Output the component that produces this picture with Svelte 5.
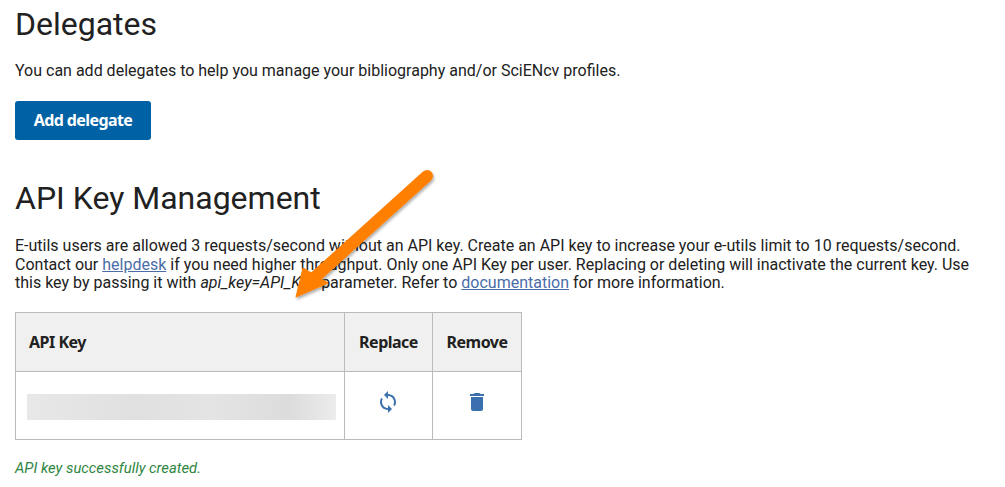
<script lang="ts">
  // key value is blurred out in the screenshot, so the cell only holds a placeholder bar
  const keyColumns = ['API Key', 'Replace', 'Remove'];
</script>

<main class="page">
  <section class="delegates">
    <h1>Delegates</h1>
    <p>You can add delegates to help you manage your bibliography and/or SciENcv profiles.</p>
    <button class="primary">Add delegate</button>
  </section>

  <section class="keys">
    <h1>API Key Management</h1>
    <p class="intro">
      E-utils users are allowed 3 requests/second without an API key. Create an API key to increase your e-utils limit to 10 requests/second. Contact our <a href="#helpdesk">helpdesk</a> if you need higher throughput. Only one API Key per user. Replacing or deleting will inactivate the current key. Use this key by passing it with <em>api_key=API_Key</em> parameter. Refer to <a href="#docs">documentation</a> for more information.
    </p>

    <table>
      <colgroup>
        <col class="c-key" />
        <col class="c-replace" />
        <col />
      </colgroup>
      <thead>
        <tr>
          {#each keyColumns as col, i}
            <th class:center={i > 0}>{col}</th>
          {/each}
        </tr>
      </thead>
      <tbody>
        <tr>
          <td class="key"><div class="blur"></div></td>
          <td class="center">
            <svg class="icon replace" width="24" height="24" viewBox="0 0 24 24" aria-label="Replace">
              <path fill="currentColor" d="M12 4V1L8 5l4 4V6c3.31 0 6 2.69 6 6 0 1.01-.25 1.97-.7 2.8l1.46 1.46C19.54 15.03 20 13.57 20 12c0-4.42-3.58-8-8-8zm0 14c-3.31 0-6-2.69-6-6 0-1.01.25-1.97.7-2.8L5.24 7.74C4.46 8.97 4 10.43 4 12c0 4.42 3.58 8 8 8v3l4-4-4-4v3z" />
            </svg>
          </td>
          <td class="center">
            <svg class="icon" width="24" height="24" viewBox="0 0 24 24" aria-label="Remove">
              <path fill="currentColor" d="M6 19c0 1.1.9 2 2 2h8c1.1 0 2-.9 2-2V7H6v12zM19 4h-3.5l-1-1h-5l-1 1H5v2h14V4z" />
            </svg>
          </td>
        </tr>
      </tbody>
    </table>

    <p class="success">API key successfully created.</p>
  </section>

  <svg class="arrow" width="150" height="140" viewBox="0 0 150 140" aria-hidden="true">
    <defs>
      <filter id="arrow-shadow" x="-20%" y="-20%" width="140%" height="140%">
        <feDropShadow dx="1" dy="2" stdDeviation="1.5" flood-color="#000" flood-opacity="0.35" />
      </filter>
    </defs>
    <g filter="url(#arrow-shadow)">
      <path d="M137 11 L24 113" fill="none" stroke="#ff8000" stroke-width="12" stroke-linecap="round" />
      <path d="M6 132 L13 103 L38 118 Z" fill="#ff8000" stroke="#ff8000" stroke-width="1" stroke-linejoin="round" />
    </g>
  </svg>
</main>

<style>
  :global(body) {
    margin: 0;
    background: #fff;
  }
  .page {
    position: relative;
    width: 1005px;
    height: 487px;
    overflow: hidden;
    padding-left: 15px;
    box-sizing: border-box;
    font: 400 16px/18.4px Roboto, sans-serif;
    color: #212121;
  }
  h1 {
    margin: 0;
    font: 400 32px/38px Roboto, sans-serif;
    color: #212121;
  }
  p {
    margin: 0;
  }
  .delegates {
    padding-top: 5px;
  }
  .delegates p {
    margin-top: 19px;
  }
  .primary {
    display: block;
    margin-top: 21px;
    width: 136px;
    height: 39px;
    padding: 0 0 2px;
    border: none;
    border-radius: 3px;
    background: #0061a5;
    color: #fff;
    font: 700 16px "Noto Sans", sans-serif;
    letter-spacing: -0.6px;
  }
  .keys {
    padding-top: 39px;
  }
  .intro {
    margin-top: 20px;
    width: 960px;
  }
  .intro em {
    padding-right: 1px;
  }
  a {
    color: #4a6da7;
    text-decoration: underline;
  }
  table {
    margin-top: 19px;
    width: 507px;
    border-collapse: collapse;
    table-layout: fixed;
  }
  .c-key {
    width: 329px;
  }
  .c-replace {
    width: 88px;
  }
  th,
  td {
    border: 1px solid #bbb;
    padding: 0;
  }
  th {
    height: 58px;
    background: #f0f0f0;
    text-align: left;
    padding-left: 13px;
    font: 700 16px "Noto Sans", sans-serif;
    letter-spacing: -0.5px;
    color: #212121;
  }
  th.center {
    padding: 0;
    text-align: center;
  }
  td {
    height: 67px;
  }
  td.center {
    text-align: center;
    color: #3a70ad;
  }
  .icon {
    display: block;
    margin: 0 auto;
    position: relative;
    top: -3px;
  }
  .icon.replace {
    left: -1px;
  }
  td.key {
    padding: 0 8px 0 11px;
  }
  .blur {
    height: 26px;
    background: linear-gradient(90deg, #e8e8e8, #e0e0e0 35%, #e4e4e4 60%, #dcdcdc 85%, #ececec);
    position: relative;
    top: 2px;
  }
  .success {
    margin-top: 19px;
    font-size: 14.8px;
    font-style: italic;
    color: #2e8540;
  }
  .arrow {
    position: absolute;
    left: 290px;
    top: 165px;
  }
</style>
